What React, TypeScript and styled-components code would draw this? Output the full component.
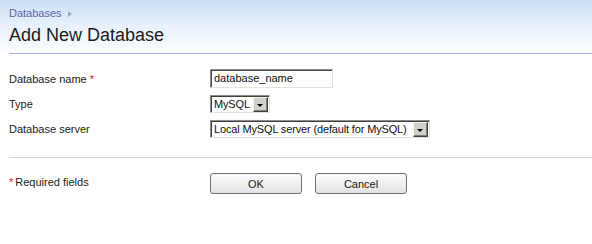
import React from 'react'
import styled, { createGlobalStyle } from 'styled-components'

const GlobalStyle = createGlobalStyle`
  body {
    margin: 0;
    background: #ffffff;
    font-family: "Liberation Sans", Arial, sans-serif;
  }
`

const StyledPage = styled.div`
  width: 592px;
  height: 244px;
  overflow: hidden;
  background: #ffffff;
`

const Header = styled.div`
  height: 53px;
  padding: 6px 0 0 9px;
  box-sizing: border-box;
  background: linear-gradient(to bottom, #c9dff7 0%, #e6f0fc 45%, #fbfdff 100%);

  .breadcrumb {
    display: flex;
    align-items: center;
    gap: 6px;
    height: 14px;
    font-size: 11px;
    color: #5f64a8;
  }

  .title {
    margin: 4px 0 0 0;
    font-size: 18px;
    font-weight: normal;
    color: #1c1c1c;
    line-height: 22px;
  }
`

const HeaderRule = styled.div`
  margin-left: 9px;
  border-top: 1px solid #a7b4e2;
`

const Crumb = styled.span`
  display: inline-block;
  width: 0;
  height: 0;
  border-top: 3px solid transparent;
  border-bottom: 3px solid transparent;
  border-left: 4px solid #9aaad6;
  margin-top: 1px;
`

const Form = styled.div`
  padding: 15px 0 0 9px;
  display: grid;
  grid-template-columns: 201px 1fr;
  row-gap: 7px;
  align-items: center;
`

const Label = styled.div`
  font-size: 11px;
  color: #222222;
`

const Required = styled.span<{ $before?: boolean }>`
  color: #e01818;
  font-size: 11px;
  margin: ${(p) => (p.$before ? '0 2px 0 0' : '0 0 0 3px')};
`

const TextInput = styled.div`
  width: 123px;
  height: 19px;
  box-sizing: border-box;
  border: 1px solid;
  border-color: #8c8c8c #e4e2dc #e4e2dc #8c8c8c;
  box-shadow: inset 1px 1px 0 #4a4a4a;
  padding: 2px 0 0 3px;
  font-size: 11px;
  color: #111111;
  background: #ffffff;
`

const SelectBox = styled.div<{ $width: number }>`
  width: ${(p) => p.$width}px;
  height: 18px;
  box-sizing: border-box;
  border: 1px solid;
  border-color: #8c8c8c #e4e2dc #e4e2dc #8c8c8c;
  box-shadow: inset 1px 1px 0 #404040;
  display: flex;
  align-items: stretch;
  background: #ffffff;
  padding: 1px 1px 0 2px;

  .value {
    flex: 1;
    font-size: 11px;
    color: #111111;
    padding: 1px 0 0 1px;
    white-space: nowrap;
    letter-spacing: -0.15px;
  }
`

const ArrowButton = styled.div`
  width: 15px;
  height: 15px;
  box-sizing: border-box;
  background: #d4d0c8;
  border: 1px solid;
  border-color: #f4f3ef #404040 #404040 #f4f3ef;
  box-shadow: inset -1px -1px 0 #808080;
  display: flex;
  align-items: center;
  justify-content: center;

  &::after {
    content: '';
    width: 0;
    height: 0;
    border-left: 3px solid transparent;
    border-right: 3px solid transparent;
    border-top: 3px solid #000000;
    margin: 1px 1px 0 0;
  }
`

const Divider = styled.div`
  margin: 19px 0 0 9px;
  border-top: 1px solid #d4d4d4;
`

const Footer = styled.div`
  padding: 15px 0 0 9px;
  display: grid;
  grid-template-columns: 201px auto;
  align-items: center;

  ${Label} {
    margin-top: -3px;
  }
`

const Buttons = styled.div`
  display: flex;
  gap: 13px;
`

const Button = styled.button`
  width: 92px;
  height: 21px;
  border: 1px solid #6f6f6f;
  border-radius: 3px;
  background: linear-gradient(to bottom, #fbfbfb 0%, #f0f0f0 50%, #e2e2e2 100%);
  font-family: "Liberation Sans", Arial, sans-serif;
  font-size: 11px;
  color: #1a1a1a;
  padding: 0;
`

const App = (): JSX.Element => {
  return (
    <StyledPage>
      <GlobalStyle />
      <Header>
        <div className="breadcrumb">
          <span>Databases</span>
          <Crumb />
        </div>
        <h1 className="title">Add New Database</h1>
      </Header>
      <HeaderRule />
      <Form>
        <Label>
          Database name<Required>*</Required>
        </Label>
        <TextInput>database_name</TextInput>
        <Label>Type</Label>
        <SelectBox $width={60}>
          <span className="value">MySQL</span>
          <ArrowButton />
        </SelectBox>
        <Label>Database server</Label>
        <SelectBox $width={220}>
          <span className="value">Local MySQL server (default for MySQL)</span>
          <ArrowButton />
        </SelectBox>
      </Form>
      <Divider />
      <Footer>
        <Label>
          <Required $before>*</Required>Required fields
        </Label>
        <Buttons>
          <Button>OK</Button>
          <Button>Cancel</Button>
        </Buttons>
      </Footer>
    </StyledPage>
  )
}

export default App
